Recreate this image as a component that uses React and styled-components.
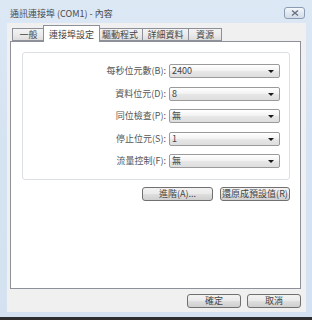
import React from "react";
import styled, { createGlobalStyle } from "styled-components";

const GlobalStyle = createGlobalStyle`
  html, body {
    margin: 0;
    padding: 0;
    background: #2e2e2e;
  }
  body {
    width: 312px;
    height: 320px;
    overflow: hidden;
    font-family: "Noto Sans CJK TC", "Liberation Sans", sans-serif;
  }
`;

const Window = styled.div`
  width: 312px;
  height: 317px;
  box-sizing: border-box;
  display: flex;
  flex-direction: column;
  background: linear-gradient(180deg, #dde8f5 0%, #d6e3f2 40%, #d3e1f1 100%);
  padding: 0 6px 5px 7px;
`;

const TitleBar = styled.div`
  height: 23px;
  display: flex;
  align-items: center;
  justify-content: space-between;
  padding: 0 1px 0 3px;
`;

const Title = styled.span`
  font-size: 9px;
  line-height: 12px;
  color: #4a4a4a;
  margin-top: 5px;
`;

const CloseButton = styled.div`
  width: 21px;
  height: 12px;
  box-sizing: border-box;
  border: 1px solid #8a9bb2;
  border-radius: 3px;
  background: linear-gradient(180deg, #f4f7fb 0%, #e1e8f1 50%, #d3dce8 100%);
  display: flex;
  align-items: center;
  justify-content: center;
  margin-top: 3px;
`;

const Client = styled.div`
  flex: 1;
  background: #f0f0f0;
  display: flex;
  flex-direction: column;
  padding: 2px 5px 4px 3px;
`;

const TabRow = styled.div`
  display: flex;
  align-items: flex-end;
  height: 16px;
  padding-left: 2px;
  position: relative;
  z-index: 1;
`;

const Tab = styled.div`
  height: ${(p) => (p.$active ? "17px" : "13px")};
  box-sizing: border-box;
  padding: 0 ${(p) => (p.$active ? "5px" : "4px")};
  margin: 0 ${(p) => (p.$active ? "-2px" : "0")};
  min-width: ${(p) => p.$w || 0}px;
  border: 1px solid #8d9099;
  border-bottom: ${(p) => (p.$active ? "none" : "1px solid #8d9099")};
  border-left: ${(p) => (p.$first || p.$active ? "1px solid #8d9099" : "none")};
  background: ${(p) =>
    p.$active ? "#ffffff" : "linear-gradient(180deg, #f3f3f3 0%, #ebebeb 50%, #dddddd 100%)"};
  font-size: 9px;
  line-height: 11px;
  color: #444;
  display: flex;
  align-items: center;
  justify-content: center;
  position: relative;
  z-index: ${(p) => (p.$active ? 2 : 1)};
  margin-bottom: ${(p) => (p.$active ? "-1px" : "0")};
`;

const Panel = styled.div`
  flex: 1;
  background: #fff;
  border: 1px solid #8d9099;
  display: flex;
  flex-direction: column;
  padding: 10px 10px 0 11px;
`;

const SettingsBox = styled.div`
  border: 1px solid #dcdfe3;
  border-radius: 3px;
  display: flex;
  flex-direction: column;
  gap: 8.5px;
  padding: 11px 9px 11px 0;
`;

const Row = styled.div`
  display: flex;
  align-items: center;
  justify-content: flex-end;
  gap: 3px;
`;

const Label = styled.span`
  font-size: 9px;
  line-height: 14px;
  color: #555;
  white-space: nowrap;
`;

const Combo = styled.div`
  width: 111px;
  height: 14px;
  box-sizing: border-box;
  border: 1px solid #9a9a9a;
  border-radius: 2px;
  background: linear-gradient(180deg, #ffffff 0%, #f3f3f3 45%, #e6e6e6 55%, #dedede 100%);
  display: flex;
  align-items: center;
  justify-content: space-between;
  padding: 0 5px 0 2px;
  font-size: 9px;
  line-height: 12px;
  color: #444;
`;

const Arrow = styled.span`
  width: 0;
  height: 0;
  border-left: 3px solid transparent;
  border-right: 3px solid transparent;
  border-top: 3px solid #1a1a1a;
  margin-top: 1px;
`;

const ButtonRow = styled.div`
  display: flex;
  justify-content: flex-end;
  gap: ${(p) => p.$gap || 6}px;
  padding: ${(p) => p.$pad || "0"};
`;

const Button = styled.div`
  width: ${(p) => p.$w}px;
  height: 14px;
  box-sizing: border-box;
  border: 1px solid #707070;
  border-radius: 3px;
  background: linear-gradient(180deg, #f2f2f2 0%, #ebebeb 45%, #dddddd 55%, #cfcfcf 100%);
  display: flex;
  align-items: center;
  justify-content: center;
  font-size: 9px;
  line-height: 12px;
  color: #444;
  white-space: nowrap;
`;

const tabs = [
  { name: "一般", w: 33 },
  { name: "連接埠設定", w: 56, active: true },
  { name: "驅動程式", w: 42 },
  { name: "詳細資料", w: 46 },
  { name: "資源", w: 33 },
];

const settings = [
  { label: "每秒位元數(B):", value: "2400" },
  { label: "資料位元(D):", value: "8" },
  { label: "同位檢查(P):", value: "無" },
  { label: "停止位元(S):", value: "1" },
  { label: "流量控制(F):", value: "無" },
];

export default function App() {
  return (
    <>
      <GlobalStyle />
      <Window>
        <TitleBar>
          <Title>通訊連接埠 (COM1) - 內容</Title>
          <CloseButton>
            <svg width="8" height="6" viewBox="0 0 8 6">
              <path d="M1 0.5 L7 5.5 M7 0.5 L1 5.5" stroke="#6a7382" strokeWidth="1.4" />
            </svg>
          </CloseButton>
        </TitleBar>
        <Client>
          <TabRow>
            {tabs.map((t, i) => (
              <Tab key={t.name} $active={t.active} $first={i === 0} $w={t.w}>
                {t.name}
              </Tab>
            ))}
          </TabRow>
          <Panel>
            <SettingsBox>
              {settings.map((s) => (
                <Row key={s.label}>
                  <Label>{s.label}</Label>
                  <Combo>
                    <span>{s.value}</span>
                    <Arrow />
                  </Combo>
                </Row>
              ))}
            </SettingsBox>
            <ButtonRow $gap={7} $pad="7px 0 0 0">
              <Button $w={71}>進階(A)...</Button>
              <Button $w={70}>還原成預設值(R)</Button>
            </ButtonRow>
          </Panel>
          <ButtonRow $gap={6} $pad="5px 0 0 0">
            <Button $w={54}>確定</Button>
            <Button $w={54}>取消</Button>
          </ButtonRow>
        </Client>
      </Window>
    </>
  );
}
